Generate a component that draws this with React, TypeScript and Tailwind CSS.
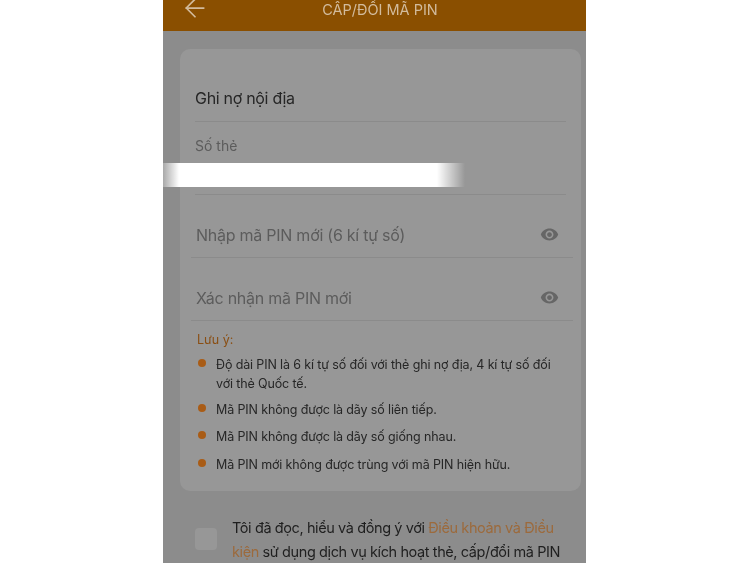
import { ArrowLeft } from "lucide-react";

const notes = [
  "Mã PIN không được là dãy số liên tiếp.",
  "Mã PIN không được là dãy số giống nhau.",
  "Mã PIN mới không được trùng với mã PIN hiện hữu.",
];

function EyeIcon() {
  return (
    <svg viewBox="0 0 24 24" className="w-[19px] h-[19px] fill-[#666666] mb-[3px]">
      <path d="M12 4.5C7 4.5 2.73 7.61 1 12c1.73 4.39 6 7.5 11 7.5s9.27-3.11 11-7.5c-1.73-4.39-6-7.5-11-7.5zM12 17c-2.76 0-5-2.24-5-5s2.24-5 5-5 5 2.24 5 5-2.24 5-5 5zm0-8c-1.66 0-3 1.34-3 3s1.34 3 3 3 3-1.34 3-3-1.34-3-3-3z" />
    </svg>
  );
}

function PinField({ label }: { label: string }) {
  return (
    <div className="h-[63px] ml-[-4px] mr-[-7px] pl-[5px] pr-[14px] border-b border-[#8b8b8b] flex items-end justify-between pb-[10px]">
      <span className="text-[16px] leading-[24px] tracking-[-0.25px] text-[#5c5c5c]">{label}</span>
      <EyeIcon />
    </div>
  );
}

function Note({ children }: { children: React.ReactNode }) {
  return (
    <li className="flex gap-[10px] text-[12.5px] leading-[19px] tracking-[-0.13px] text-[#262626]">
      <span className="mt-[4px] w-[8px] h-[8px] rounded-full bg-[#a95c16] shrink-0" />
      <span>{children}</span>
    </li>
  );
}

export default function App() {
  return (
    <div className="h-[563px] w-[750px] overflow-hidden bg-white font-['Inter','Noto_Sans',sans-serif] relative">
      <div className="ml-[163px] w-[423px] h-[563px] bg-[#8c8c8c] overflow-hidden blur-[0.4px]">
        <header className="h-[31px] bg-[#8a4f00] relative flex justify-center pl-[11px]">
          <ArrowLeft size={30} strokeWidth={1.4} className="absolute left-[17px] top-[-7px] text-[#d2bb9c]" />
          <span className="text-[14.5px] leading-[19px] text-[#d2bb9c]">CẤP/ĐỔI MÃ PIN</span>
        </header>

        <section className="mt-[18px] ml-[17px] mr-[5px] h-[442px] bg-[#979797] rounded-[10px] pl-[15px] pr-[15px]">
          <div className="h-[73px] border-b border-[#8b8b8b] flex items-end pb-[11px]">
            <span className="text-[16px] leading-[24px] tracking-[-0.3px] text-[#262626]">Ghi nợ nội địa</span>
          </div>
          <div className="h-[73px] border-b border-[#8b8b8b] pt-[11px]">
            <span className="text-[14px] leading-[20px] text-[#5c5c5c]">Số thẻ</span>
          </div>
          <PinField label="Nhập mã PIN mới (6 kí tự số)" />
          <PinField label="Xác nhận mã PIN mới" />

          <p className="mt-[10px] ml-[2px] text-[12.5px] leading-[18px] text-[#8a4f14]">Lưu ý:</p>
          <ul className="mt-[6px] flex flex-col gap-[8.5px] pl-[3px]">
            <div className="mb-[-2px]">
              <Note>Độ dài PIN là 6 kí tự số đối với thẻ ghi nợ địa, 4 kí tự số đối với thẻ Quốc tế.</Note>
            </div>
            {notes.map((n) => (
              <Note key={n}>{n}</Note>
            ))}
          </ul>
        </section>

        <div className="mt-[25px] ml-[32px] mr-[20px] flex items-start gap-[15px]">
          <span className="mt-[12px] w-[22px] h-[22px] rounded-[4px] bg-[#979797] shrink-0" />
          <p className="text-[14.5px] leading-[24px] tracking-[-0.4px] text-[#1f1f1f]">
            Tôi đã đọc, hiểu và đồng ý với <span className="text-[#9c6a3c]">Điều khoản và Điều kiện</span> sử dụng dịch vụ kích hoạt thẻ, cấp/đổi mã PIN
          </p>
        </div>
      </div>

      {/* redacted card number */}
      <div className="absolute left-[163px] top-[163px] w-[302px] h-[24px] bg-[linear-gradient(90deg,rgba(255,255,255,0.25)_0px,#ffffff_16px,#ffffff_274px,rgba(255,255,255,0)_302px)]" />
    </div>
  );
}
